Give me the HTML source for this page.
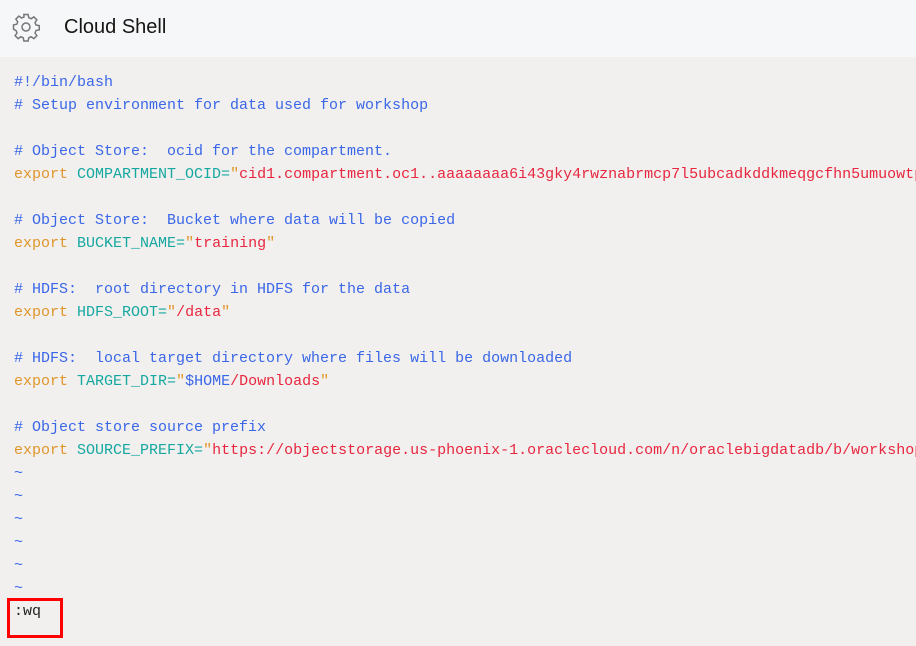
<!DOCTYPE html>
<html><head><style>
html,body{margin:0;padding:0;width:916px;height:646px;overflow:hidden;background:#f1f0ee}
.hdr{position:absolute;left:0;top:0;width:916px;height:57px;background:#f6f7f8}
.hdr .t{position:absolute;left:64px;top:16px;font:20px "Liberation Sans",sans-serif;color:#161513}
.hdr svg{position:absolute;left:11px;top:12px}
pre{position:absolute;left:14px;top:71px;margin:0;font:15px/23px "Liberation Mono",monospace;color:#3a66e8;white-space:pre}
.k{color:#e0952a}.v{color:#16a8a0}.s{color:#e8263f}.c{color:#3a66e8}.x{color:#222}
.box{position:absolute;left:7px;top:598px;width:50px;height:34px;border:3px solid #f00}
</style></head><body>
<div class="hdr">
<svg width="30" height="30" viewBox="0 0 24 24" fill="none" stroke="#777" stroke-width="1.2"><circle cx="12" cy="12" r="3.2"/><path d="M10.3 2h3.4l.5 2.6 1.9.8 2.2-1.5 2.4 2.4-1.5 2.2.8 1.9 2.6.5v3.4l-2.6.5-.8 1.9 1.5 2.2-2.4 2.4-2.2-1.5-1.9.8-.5 2.6h-3.4l-.5-2.6-1.9-.8-2.2 1.5-2.4-2.4 1.5-2.2-.8-1.9L2 13.7v-3.4l2.6-.5.8-1.9-1.5-2.2 2.4-2.4 2.2 1.5 1.9-.8z"/></svg>
<div class="t">Cloud Shell</div></div>
<pre>#!/bin/bash
# Setup environment for data used for workshop

# Object Store:  ocid for the compartment.
<span class="k">export</span> <span class="v">COMPARTMENT_OCID=</span><span class="s"><span class="k">"</span>cid1.compartment.oc1..aaaaaaaa6i43gky4rwznabrmcp7l5ubcadkddkmeqgcfhn5umuowtp</span>

# Object Store:  Bucket where data will be copied
<span class="k">export</span> <span class="v">BUCKET_NAME=</span><span class="k">"</span><span class="s">training</span><span class="k">"</span>

# HDFS:  root directory in HDFS for the data
<span class="k">export</span> <span class="v">HDFS_ROOT=</span><span class="k">"</span><span class="s">/data</span><span class="k">"</span>

# HDFS:  local target directory where files will be downloaded
<span class="k">export</span> <span class="v">TARGET_DIR=</span><span class="k">"</span><span class="c">$HOME</span><span class="s">/Downloads</span><span class="k">"</span>

# Object store source prefix
<span class="k">export</span> <span class="v">SOURCE_PREFIX=</span><span class="k">"</span><span class="s">https://objectstorage.us-phoenix-1.oraclecloud.com/n/oraclebigdatadb/b/workshop</span>
~
~
~
~
~
~
<span class="x">:wq</span></pre>
<div class="box"></div>
</body></html>
